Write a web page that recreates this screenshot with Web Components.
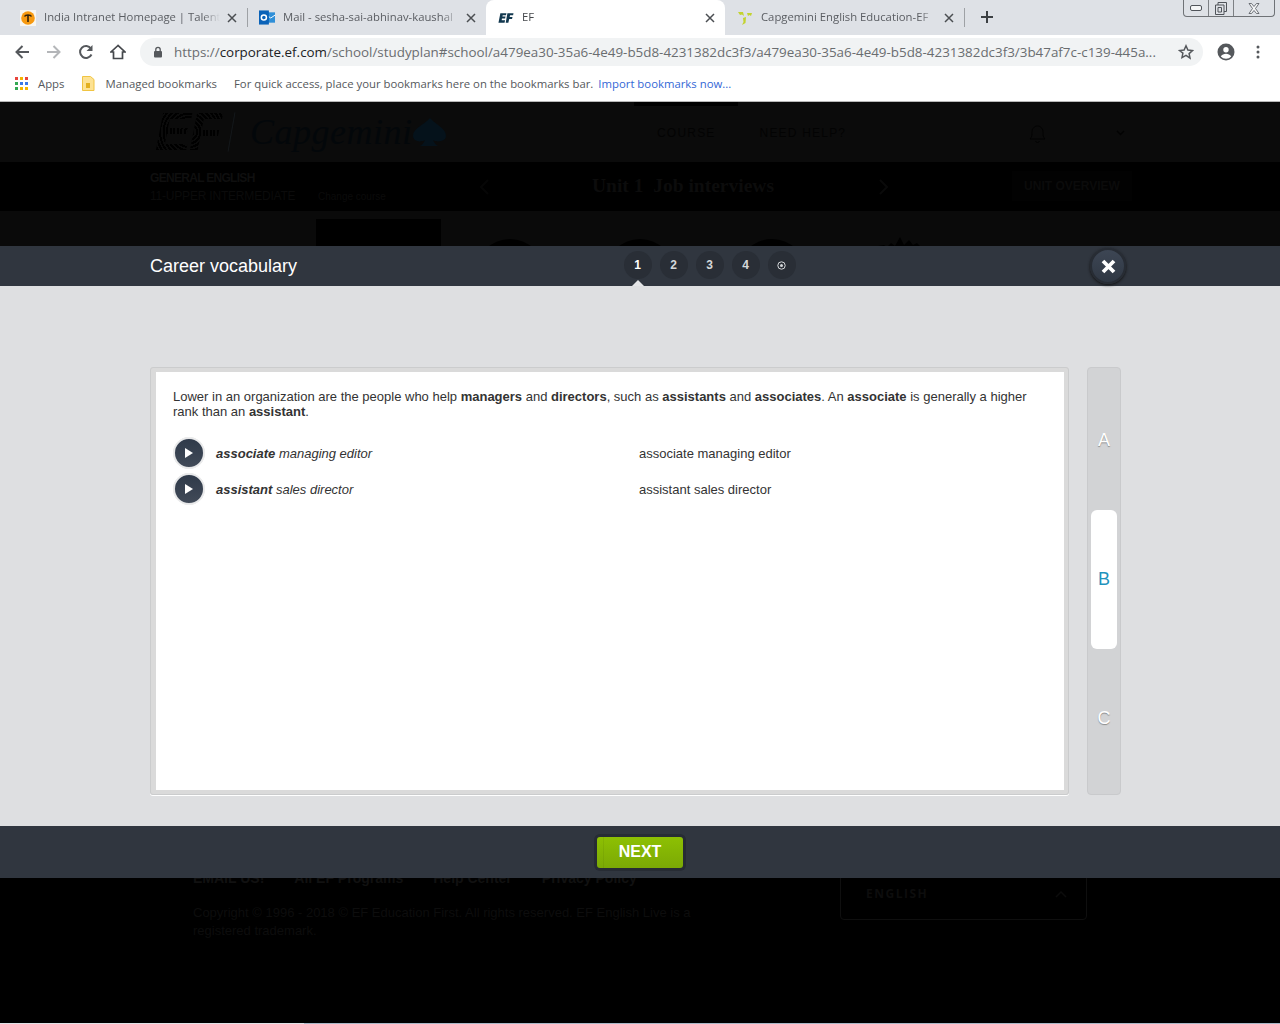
<!DOCTYPE html>
<html>
<head>
<meta charset="utf-8">
<title>EF</title>
<style>
html, body { margin: 0; height: 1024px; overflow: hidden; background: #000; font-family: "Liberation Sans", Arial, sans-serif; }
body { display: flex; flex-direction: column; }
</style>
</head>
<body>
<browser-tabs>
  <browser-tab title-text="India Intranet Homepage | Talent" icon="talent" sep></browser-tab>
  <browser-tab title-text="Mail - sesha-sai-abhinav-kaushal" icon="mail"></browser-tab>
  <browser-tab title-text="EF" icon="ef" active></browser-tab>
  <browser-tab title-text="Capgemini English Education-EF" icon="cap" sep></browser-tab>
</browser-tabs>
<browser-toolbar></browser-toolbar>
<bookmarks-bar></bookmarks-bar>
<page-backdrop>
  <lesson-modal heading="Career vocabulary">
    <activity-card>
      <p>Lower in an organization are the people who help <b>managers</b> and <b>directors</b>, such as <b>assistants</b> and <b>associates</b>. An <b>associate</b> is generally a higher rank than an <b>assistant</b>.</p>
      <vocab-row translation="associate managing editor"><b>associate</b> managing editor</vocab-row>
      <vocab-row translation="assistant sales director"><b>assistant</b> sales director</vocab-row>
    </activity-card>
  </lesson-modal>
</page-backdrop>

<script>
const icons = {
  talent: `<svg width="16" height="16" viewBox="0 0 16 16"><rect width="16" height="16" fill="#f8f6f0"/><circle cx="8" cy="8" r="6.800" fill="#f7990f"/><path d="M4.500 6.500C5.500 4.500 10.500 4.500 11.500 6.500M8 5v7" stroke="#33240c" stroke-width="1.600" fill="none"/></svg>`,
  mail: `<svg width="17" height="17" viewBox="0 0 17 17"><rect x="7" y="3" width="10" height="11" fill="#2f8fd8"/><path d="M8 6l4.500 3 4.500-3" stroke="#fff" fill="none"/><rect x="0" y="1" width="10.500" height="15" fill="#0a62b8"/><circle cx="5.200" cy="8.500" r="2.700" fill="none" stroke="#fff" stroke-width="1.600"/></svg>`,
  ef: `<svg width="17" height="12" viewBox="0 0 17 12"><path d="M2.500 1h6.500l-.5 2H5l-.3 1.500h3.300l-.5 2H4.200L3.900 8.500h3.600l-.5 2.500H.5zM10 1h6.500l-.5 2h-3.200l-.4 2h3l-.5 2h-3L11 11H8.200z" fill="#12384f"/></svg>`,
  cap: `<svg width="16" height="16" viewBox="0 0 16 16"><path d="M1 2h5l1 4-2-1.500L3 5zM10 3h5l-1 3-1.500-1L11 6zM6 8l3-1-.5 6L5 15l1.500-3z" fill="#c3d32e"/></svg>`
};

class BrowserTabs extends HTMLElement {
  constructor() {
    super();
    this.attachShadow({mode: 'open'}).innerHTML = `
      <style>
        :host { display: flex; height: 35px; background: #dee1e6; padding-left: 8px; position: relative; flex: none; }
        .plus { width: 16px; height: 16px; margin: 9px 0 0 15px; }
        .win { position: absolute; right: 5px; top: 0; width: 92px; height: 17px; box-sizing: border-box; border: 1px solid #6f7276; border-top: 0; border-radius: 0 0 4px 4px; display: flex; }
        .win span { display: flex; align-items: center; justify-content: center; border-right: 1px solid #7d8084; box-sizing: border-box; }
        .win span:nth-child(1) { width: 25px; }
        .win span:nth-child(2) { width: 25px; }
        .win span:nth-child(3) { flex: 1; border: 0; }
      </style>
      <slot></slot>
      <svg class="plus" viewBox="0 0 16 16"><path d="M8 2v12M2 8h12" stroke="#3c4043" stroke-width="2"/></svg>
      <div class="win">
        <span><svg width="12" height="6" viewBox="0 0 12 6"><rect x=".5" y=".5" width="11" height="5" rx="1.500" fill="#f4f5f6" stroke="#50545a"/></svg></span>
        <span><svg width="12" height="13" viewBox="0 0 12 13"><path d="M3 3V.5h8.500v9H9M.5 3h8.500v9.500H.5zM3 5.500h3.500V10H3z" fill="none" stroke="#50545a"/></svg></span>
        <span><svg width="14" height="11" viewBox="0 0 14 11"><path d="M2 .5h2.500L7 3.500 9.500.5H12L8.500 5.500 12 10.500H9.500L7 7.500 4.500 10.500H2L5.500 5.500z" fill="#f4f5f6" stroke="#50545a" stroke-width=".8"/></svg></span>
      </div>`;
  }
}

class BrowserTab extends HTMLElement {
  constructor() {
    super();
    this.attachShadow({mode: 'open'});
  }
  connectedCallback() {
    const name = this.getAttribute('title-text');
    this.shadowRoot.innerHTML = `
      <style>
        :host { display: flex; align-items: center; width: 239px; height: 35px; box-sizing: border-box; padding: 0 10px 0 12px; position: relative; font: 11.300px "Open Sans", sans-serif; color: #5a5d62; }
        :host([active]) { background: #fff; border-radius: 8px 8px 0 0; color: #45484c; }
        :host([sep])::after { content: ""; position: absolute; right: -1px; top: 8px; height: 19px; width: 1px; background: #9ea1a5; }
        .ic { width: 16px; height: 16px; display: flex; align-items: center; justify-content: center; flex: none; }
        .t { flex: 1; margin: 0 0 2px 8px; white-space: nowrap; overflow: hidden; -webkit-mask-image: linear-gradient(90deg,#000 90%,transparent); mask-image: linear-gradient(90deg,#000 90%,transparent); }
        svg.x { flex: none; margin-left: 7px; }
      </style>
      <span class="ic">${icons[this.getAttribute('icon')]}</span>
      <span class="t">${name}</span>
      <svg class="x" width="10" height="10" viewBox="0 0 10 10"><path d="M1 1l8 8M9 1l-8 8" stroke="#4b4e52" stroke-width="1.500"/></svg>`;
  }
}

class BrowserToolbar extends HTMLElement {
  constructor() {
    super();
    this.attachShadow({mode: 'open'}).innerHTML = `
      <style>
        :host { display: flex; align-items: center; height: 34px; background: #fff; flex: none; padding-left: 14px; }
        svg { flex: none; display: block; }
        .nav { display: flex; gap: 16px; align-items: center; }
        .omni { margin-left: 14px; width: 1063px; height: 28px; border-radius: 14px; background: #f1f3f4; display: flex; align-items: center; box-sizing: border-box; padding-left: 13px; position: relative; }
        .url { margin-left: 11px; font: 13.400px "Open Sans", sans-serif; color: #6a6d70; white-space: nowrap; }
        .url b { font-weight: 400; color: #202124; }
        .star { position: absolute; right: 9px; top: 6px; }
        .right { display: flex; align-items: center; margin-left: 14px; gap: 21px; }
      </style>
      <div class="nav">
        <svg width="16" height="16" viewBox="0 0 16 16"><path d="M15 8H2.500M8.500 2l-6 6 6 6" fill="none" stroke="#55585c" stroke-width="2"/></svg>
        <svg width="16" height="16" viewBox="0 0 16 16"><path d="M1 8h12.500M7.500 2l6 6-6 6" fill="none" stroke="#b4b6b9" stroke-width="2"/></svg>
        <svg width="16" height="16" viewBox="0 0 16 16"><path d="M13.500 10.500A6 6 0 1 1 13 4.500" fill="none" stroke="#55585c" stroke-width="2"/><path d="M14.500 1v6h-6z" fill="#55585c"/></svg>
        <svg width="16" height="16" viewBox="0 0 16 16"><path d="M8 1.500L1 8h2.500v6.500h9V8H15z" fill="none" stroke="#45484c" stroke-width="1.700"/></svg>
      </div>
      <div class="omni">
        <svg width="10" height="12" viewBox="0 0 10 12"><rect x="1" y="5" width="8" height="6.500" rx="1" fill="#55585c"/><path d="M2.800 5V3.500a2.200 2.200 0 0 1 4.400 0V5" fill="none" stroke="#55585c" stroke-width="1.300"/></svg>
        <span class="url">https://<b>corporate.ef.com</b>/school/studyplan#school/a479ea30-35a6-4e49-b5d8-4231382dc3f3/a479ea30-35a6-4e49-b5d8-4231382dc3f3/3b47af7c-c139-445a...</span>
        <svg class="star" width="16" height="16" viewBox="0 0 16 16"><path d="M8 1.800l1.900 4.200 4.600.5-3.400 3.100.9 4.500L8 11.300 4 13.600l.9-4.500L1.500 6.500l4.600-.5z" fill="none" stroke="#55585c" stroke-width="1.500"/></svg>
      </div>
      <div class="right">
        <svg width="18" height="18" viewBox="0 0 18 18"><circle cx="9" cy="9" r="8.500" fill="#55585c"/><circle cx="9" cy="6.800" r="2.700" fill="#fff"/><path d="M3.800 13.500c1-2 3.200-2.800 5.200-2.800s4.200.8 5.200 2.800A7 7 0 0 1 9 15.800a7 7 0 0 1-5.200-2.300z" fill="#fff"/></svg>
        <svg width="4" height="14" viewBox="0 0 4 14"><g fill="#55585c"><circle cx="2" cy="2" r="1.500"/><circle cx="2" cy="7" r="1.500"/><circle cx="2" cy="12" r="1.500"/></g></svg>
      </div>`;
  }
}

class BookmarksBar extends HTMLElement {
  constructor() {
    super();
    const dots = ['#e8453c','#f4b400','#e8453c','#34a853','#3b78e7','#3b78e7','#34a853','#f4b400','#f4b400'];
    this.attachShadow({mode: 'open'}).innerHTML = `
      <style>
        :host { display: flex; align-items: center; height: 29px; padding: 0 0 3px 15px; background: #fff; border-bottom: 1px solid #b8b8b8; flex: none; font: 11.350px "Open Sans", sans-serif; color: #55585c; }
        .grid { display: grid; grid-template-columns: repeat(3, 3px); gap: 2px; width: 13px; }
        .grid i { height: 3px; display: block; }
        .apps { margin-left: 10px; }
        .mb { margin-left: 18px; flex: none; }
        .m { margin-left: 10px; }
        .h { margin-left: 17px; }
        a { color: #3367d6; margin-left: 5px; text-decoration: none; }
      </style>
      <div class="grid">${dots.map(c => `<i style="background:${c}"></i>`).join('')}</div>
      <span class="apps">Apps</span>
      <svg class="mb" width="13" height="15" viewBox="0 0 13 15"><path d="M.5.500h8l3.500 3v11H.5z" fill="#fde293" stroke="#f0c442"/><path d="M4 7h4v5H4z" fill="#e3b01f"/></svg>
      <span class="m">Managed bookmarks</span>
      <span class="h">For quick access, place your bookmarks here on the bookmarks bar.</span>
      <a>Import bookmarks now...</a>`;
  }
}

// the dimmed course page behind the modal
class PageBackdrop extends HTMLElement {
  constructor() {
    super();
    this.attachShadow({mode: 'open'}).innerHTML = `
      <style>
        :host { display: block; flex: 1; position: relative; background: #000; overflow: hidden; }
        .head { height: 60px; background: #0b0b0b; display: flex; align-items: center; position: relative; padding-left: 155px; }
        .tabline { position: absolute; left: 634px; top: 0; width: 104px; height: 4px; background: #000; }
        .logo { display: flex; align-items: center; gap: 6px; }
        .ef { font: italic bold 54px/1.100 "Liberation Sans", sans-serif; letter-spacing: -2px; width: 70px; color: transparent; background: repeating-radial-gradient(circle at 34px 30px, #000 0 2px, #0b0b0b 2px 3.500px); -webkit-background-clip: text; background-clip: text; }
        .slash { width: 1px; height: 40px; background: #14181b; transform: rotate(10deg); }
        .cap { font: italic 36px/1 "Liberation Serif", serif; color: #03070a; margin-left: 12px; letter-spacing: .5px; width: 160px; white-space: nowrap; }
        .spade { margin-left: -4px; display: block; }
        .nav { position: absolute; left: 657px; top: 24px; display: flex; gap: 44px; font-size: 12px; letter-spacing: 1.200px; color: #030303; }
        .bell { position: absolute; left: 1029px; top: 22px; }
        .chev { position: absolute; left: 1116px; top: 28px; }
        .bar { height: 49px; background: #000; position: relative; }
        .l1 { position: absolute; left: 150px; top: 9px; font: bold 12px "Liberation Sans", sans-serif; color: #0f0f0f; letter-spacing: -.7px; }
        .l2 { position: absolute; left: 150px; top: 27px; font-size: 12px; letter-spacing: -.2px; color: #0b0b0b; }
        .change { position: absolute; left: 318px; top: 29px; font-size: 10px; color: #0b0b0b; }
        .unit { position: absolute; left: 592px; top: 13px; font: bold 19.500px "Liberation Serif", serif; color: #0c0c0c; }
        .prev { position: absolute; left: 478px; top: 16px; }
        .next { position: absolute; left: 878px; top: 16px; }
        .ov { position: absolute; left: 1012px; top: 9px; width: 120px; height: 30px; background: #020202; color: #0b0b0b; font: bold 12px/30px "Liberation Sans", sans-serif; text-align: center; }
        .mid { height: 91px; background: #0a0a0a; position: relative; }
        .mid i { position: absolute; background: #000; display: block; }
        .crown { position: absolute; left: 878px; top: 25px; }
        .foot { position: absolute; left: 193px; top: 767px; width: 510px; color: #0d0d0d; font-size: 13px; line-height: 18px; }
        .links { display: flex; gap: 30px; font-weight: bold; font-size: 14px; color: #111; }
        .copy { margin-top: 17px; }
        .lang { position: absolute; left: 840px; top: 767px; width: 247px; height: 51px; box-sizing: border-box; border: 1px solid #0f0f0f; border-radius: 4px; }
        .lang span { position: absolute; left: 25px; top: 15px; font: bold 12px "Open Sans", sans-serif; letter-spacing: 1.500px; color: #0d0d0d; }
        .lang svg { position: absolute; left: 214px; top: 21px; }
        .strip { position: absolute; left: 0; right: 0; bottom: 0; height: 1px; background: linear-gradient(90deg,#dfe3e8 0,#dfe3e8 304px,#a9b8c8 304px,#a9b8c8 100%); }
      </style>
      <div class="head">
        <i class="tabline"></i>
        <div class="logo">
          <span class="ef">EF</span><i class="slash"></i><span class="cap">Capgemini</span>
          <svg class="spade" width="35" height="30" viewBox="0 0 35 30"><path d="M18 1C11 9 1 11 1 19c0 5 7 7 12 4-1 3-3 5-5 6h18c-2-1-4-3-5-6 5 3 13 1 13-4 0-8-9-10-16-18z" fill="#05121b"/></svg>
        </div>
        <div class="nav"><span>COURSE</span><span>NEED HELP?</span></div>
        <svg class="bell" width="17" height="20" viewBox="0 0 17 20"><path d="M1 15c2-2 2-4 2-7s2-6 5.500-6S14 5 14 8s0 5 2 7zM6.500 17c.5 2 3.500 2 4 0" fill="none" stroke="#030303"/></svg>
        <svg class="chev" width="9" height="6" viewBox="0 0 9 6"><path d="M1 1l3.500 3.500L8 1" fill="none" stroke="#020202" stroke-width="1.500"/></svg>
      </div>
      <div class="bar">
        <span class="l1">GENERAL ENGLISH</span>
        <span class="l2">11-UPPER INTERMEDIATE</span>
        <span class="change">Change course</span>
        <svg class="prev" width="12" height="18" viewBox="0 0 12 18"><path d="M10 2L3 9l7 7" fill="none" stroke="#060606" stroke-width="2"/></svg>
        <span class="unit">Unit 1&nbsp;&nbsp;Job interviews</span>
        <svg class="next" width="12" height="18" viewBox="0 0 12 18"><path d="M2 2l7 7-7 7" fill="none" stroke="#0a0a0a" stroke-width="2"/></svg>
        <span class="ov">UNIT OVERVIEW</span>
      </div>
      <div class="mid">
        <i style="left:316px;top:8px;width:125px;height:40px"></i>
        <i style="left:475px;top:28px;width:70px;height:70px;border-radius:50%"></i>
        <i style="left:605px;top:28px;width:70px;height:70px;border-radius:50%"></i>
        <i style="left:737px;top:28px;width:70px;height:70px;border-radius:50%"></i>
        <svg class="crown" width="50" height="20" viewBox="0 0 50 20"><path d="M0 10l6-1 3 2 4-4 4 3 5-9 4 8 5-5 4 5 4-2 3 3 8 0v10H0z" fill="#000"/></svg>
      </div>
      <div class="foot">
        <div class="links"><span>EMAIL US!</span><span>All EF Programs</span><span>Help Center</span><span>Privacy Policy</span></div>
        <div class="copy">Copyright © 1996 - 2018 © EF Education First. All rights reserved. EF English Live is a registered trademark.</div>
      </div>
      <div class="lang"><span>ENGLISH</span><svg width="12" height="7" viewBox="0 0 12 7"><path d="M1 6l5-5 5 5" fill="none" stroke="#0c0c0c" stroke-width="1.500"/></svg></div>
      <div class="strip"></div>
      <slot></slot>`;
  }
}

class LessonModal extends HTMLElement {
  constructor() {
    super();
    this.attachShadow({mode: 'open'});
  }
  connectedCallback() {
    const steps = ['1', '2', '3', '4'];
    this.shadowRoot.innerHTML = `
      <style>
        :host { display: flex; flex-direction: column; position: absolute; left: 0; right: 0; top: 144px; height: 632px; }
        header { height: 40px; background: #30363f; display: flex; align-items: center; position: relative; padding-left: 150px; flex: none; }
        h1 { margin: 0; font: 18px "Liberation Sans", sans-serif; color: #fff; }
        .steps { position: absolute; left: 624px; top: 5px; display: flex; gap: 8px; }
        .steps span { width: 28px; height: 28px; box-sizing: border-box; padding-right: 1px; border-radius: 50%; background: #292e36; color: #d5d8da; font: bold 12px/28px "Liberation Sans", sans-serif; display: flex; align-items: center; justify-content: center; }
        .steps span.on { color: #fff; }
        .arrow { position: absolute; left: 632px; top: 34px; width: 0; height: 0; border: 6px solid transparent; border-top: 0; border-bottom-color: #e4e5e7; }
        .close { position: absolute; left: 1090px; top: 2px; width: 36px; height: 36px; border-radius: 50%; background: linear-gradient(#3d4654,#2f3743); border: 2px solid #272c34; box-sizing: border-box; box-shadow: 0 1px 3px #111; display: flex; align-items: center; justify-content: center; }
        .main { flex: 1; background: #dedfe1; display: flex; padding: 81px 159px 31px 150px; gap: 18px; min-height: 0; }
        footer { height: 52px; background: #30363f; display: flex; align-items: center; justify-content: center; flex: none; }
        .next { width: 86px; height: 31px; border-radius: 3px; background: linear-gradient(90deg, transparent 6px, rgba(0,0,0,.06) 6px, rgba(0,0,0,.06) 7px, transparent 7px), linear-gradient(#8dc003,#7ba905); color: #fff; font: bold 16px/29px "Liberation Sans", sans-serif; text-align: center; box-shadow: 0 0 0 3px #272c34; }
        .tabs { width: 34px; height: 428px; flex: none; box-sizing: border-box; background: #d2d3d5; border: 1px solid #c9cacc; border-radius: 4px; padding: 3px 3px 6px; display: flex; flex-direction: column; font: 18px "Liberation Sans", sans-serif; color: #fff; text-align: center; }
        .tabs span { height: 139px; display: flex; align-items: center; justify-content: center; text-shadow: 0 1px 1px #8a8a8a; }
        .tabs span.on { background: #fff; color: #1f93bd; border-radius: 6px; text-shadow: none; }
      </style>
      <header>
        <h1>${this.getAttribute('heading')}</h1>
        <div class="steps">
          ${steps.map((s, i) => `<span class="${i == 0 ? 'on' : ''}">${s}</span>`).join('')}
          <span><svg width="9" height="9" viewBox="0 0 9 9"><circle cx="4.500" cy="4.500" r="3.700" fill="none" stroke="#d5d8da"/><circle cx="4.500" cy="4.500" r="1.500" fill="#d5d8da"/></svg></span>
        </div>
        <i class="arrow"></i>
        <div class="close"><svg width="17" height="17" viewBox="0 0 17 17"><path d="M3 3l11 11M14 3L3 14" stroke="#fff" stroke-width="3.800"/></svg></div>
      </header>
      <div class="main">
        <slot></slot>
        <div class="tabs"><span>A</span><span class="on">B</span><span>C</span></div>
      </div>
      <footer><div class="next">NEXT</div></footer>`;
  }
}

class ActivityCard extends HTMLElement {
  constructor() {
    super();
    this.attachShadow({mode: 'open'}).innerHTML = `
      <style>
        :host { display: block; width: 919px; height: 428px; flex: none; box-sizing: border-box; background: #fff; border-style: solid; border-color: #dadada; border-width: 5px 5px 5px 6px; border-radius: 3px; outline: 1px solid #cbcccd; outline-offset: -1px; box-shadow: 0 1px 0 #fff; padding: 17px 17px 0; font: 13px/15px "Liberation Sans", sans-serif; color: #333; }
        ::slotted(p) { margin: 0 0 16px; }
      </style>
      <slot></slot>`;
  }
}

class VocabRow extends HTMLElement {
  constructor() {
    super();
    this.attachShadow({mode: 'open'});
  }
  connectedCallback() {
    this.shadowRoot.innerHTML = `
      <style>
        :host { display: flex; align-items: center; height: 36px; font: 13px "Liberation Sans", sans-serif; color: #333; }
        .play { width: 32px; height: 32px; flex: none; box-sizing: border-box; border-radius: 50%; background: linear-gradient(#2f3a4a,#414a58); border: 2px solid #e3e4e6; outline: 1px solid #eee; outline-offset: -1px; display: flex; align-items: center; justify-content: center; }
        .word { width: 423px; margin-left: 11px; font-style: italic; flex: none; }
        .tr { flex: none; }
      </style>
      <div class="play"><svg width="8" height="10" viewBox="0 0 8 10"><path d="M0 0l8 5-8 5z" fill="#fff"/></svg></div>
      <div class="word"><slot></slot></div>
      <div class="tr">${this.getAttribute('translation')}</div>`;
  }
}

customElements.define('browser-tabs', BrowserTabs);
customElements.define('browser-tab', BrowserTab);
customElements.define('browser-toolbar', BrowserToolbar);
customElements.define('bookmarks-bar', BookmarksBar);
customElements.define('page-backdrop', PageBackdrop);
customElements.define('lesson-modal', LessonModal);
customElements.define('activity-card', ActivityCard);
customElements.define('vocab-row', VocabRow);
</script>
</body>
</html>
